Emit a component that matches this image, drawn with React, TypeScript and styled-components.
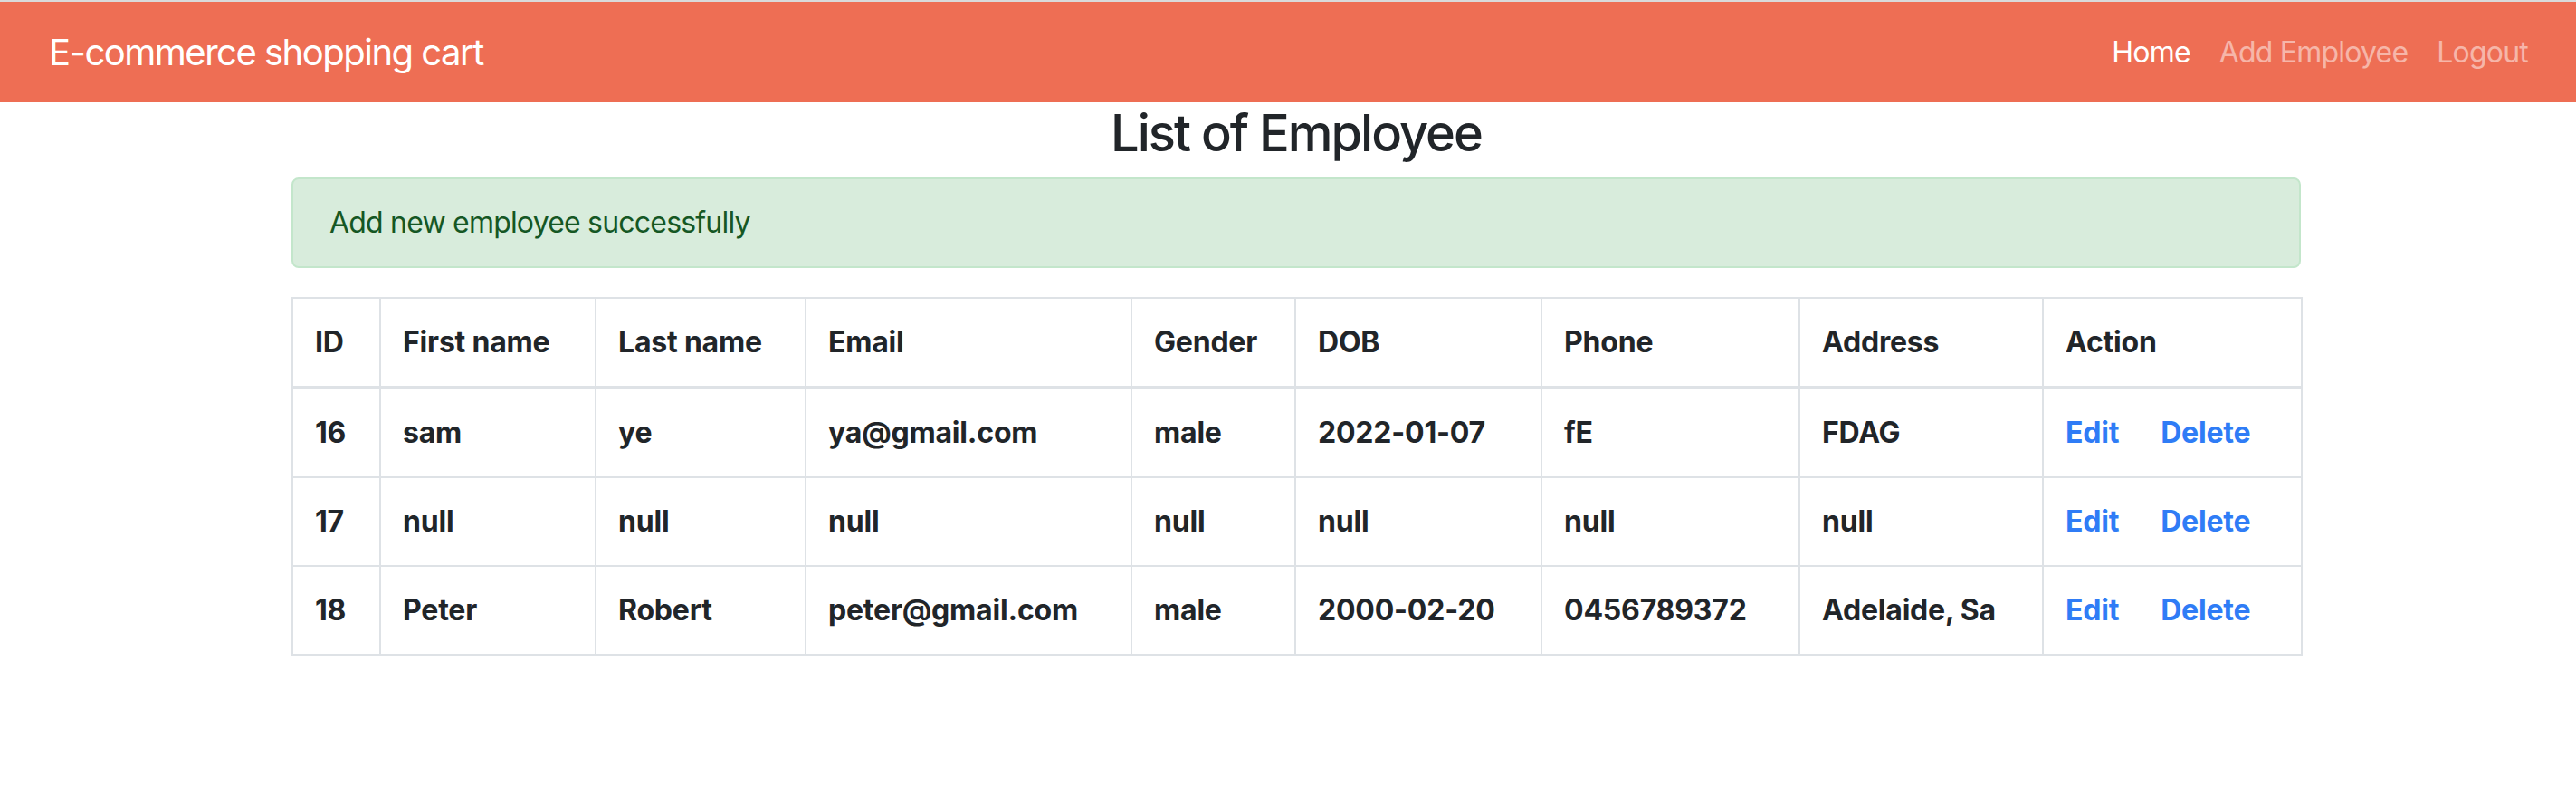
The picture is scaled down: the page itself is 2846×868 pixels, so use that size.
import React from 'react';
import styled, { createGlobalStyle } from 'styled-components';

const GlobalStyle = createGlobalStyle`
  html, body {
    margin: 0;
    padding: 0;
    background: #fff;
  }
  body {
    font-family: Inter, "Noto Sans", "Liberation Sans", sans-serif;
    color: #212529;
    font-size: 32px;
    line-height: 1.5;
  }
  * {
    box-sizing: border-box;
  }
`;

const Page = styled.div`
  min-height: 868px;
  border-top: 2px solid #dadada;
`;

const Navbar = styled.nav`
  height: 111px;
  background: #ee6e54;
  display: flex;
  align-items: center;
  justify-content: space-between;
  padding: 0 37px 0 54px;
`;

const Brand = styled.a`
  color: #fff;
  font-size: 40px;
  line-height: 60px;
  letter-spacing: -1.5px;
  text-decoration: none;
`;

const NavList = styled.ul`
  list-style: none;
  margin: 0;
  padding: 0;
  display: flex;
`;

const NavLink = styled.a<{ $active?: boolean }>`
  display: block;
  padding: 16px 16px;
  font-size: 32px;
  line-height: 48px;
  letter-spacing: -0.8px;
  text-decoration: none;
  color: ${p => (p.$active ? '#fff' : 'rgba(255, 255, 255, 0.5)')};
`;

const Container = styled.main`
  width: 2220px;
  margin-left: 322px;
`;

const Title = styled.h3`
  margin: 0 0 16px;
  padding-top: 2px;
  font-size: 56px;
  line-height: 65px;
  font-weight: 500;
  letter-spacing: -2px;
  text-align: center;
`;

const Alert = styled.div`
  padding: 24px 40px;
  margin-bottom: 32px;
  border: 2px solid #c3e6cb;
  border-radius: 8px;
  background: #d8ecdc;
  color: #155724;
  font-size: 32px;
  line-height: 48px;
  letter-spacing: -0.8px;
`;

const Table = styled.table`
  width: 100%;
  border-collapse: collapse;
  table-layout: fixed;
  font-size: 32px;
  line-height: 48px;
`;

const HeadCell = styled.th`
  text-align: left;
  font-weight: 700;
  padding: 24px;
  border: 2px solid #dee2e6;
  border-bottom-width: 4px;
  white-space: nowrap;
  letter-spacing: -0.2px;
`;

const Cell = styled.td`
  font-weight: 700;
  padding: 24px;
  border: 2px solid #dee2e6;
  white-space: nowrap;
  overflow: hidden;
  letter-spacing: -0.2px;
`;

const ActionLink = styled.a<{ $gap?: boolean }>`
  color: #2f7cf6;
  text-decoration: none;
  font-weight: 700;
  margin-right: ${p => (p.$gap ? '46px' : '0')};
`;

const columns = [
  { label: 'ID', width: 97 },
  { label: 'First name', width: 238 },
  { label: 'Last name', width: 232 },
  { label: 'Email', width: 360 },
  { label: 'Gender', width: 181 },
  { label: 'DOB', width: 272 },
  { label: 'Phone', width: 285 },
  { label: 'Address', width: 269 },
  { label: 'Action', width: 286 },
];

const employees = [
  { id: 16, first: 'sam', last: 'ye', email: 'ya@gmail.com', gender: 'male', dob: '2022-01-07', phone: 'fE', address: 'FDAG' },
  { id: 17, first: 'null', last: 'null', email: 'null', gender: 'null', dob: 'null', phone: 'null', address: 'null' },
  { id: 18, first: 'Peter', last: 'Robert', email: 'peter@gmail.com', gender: 'male', dob: '2000-02-20', phone: '0456789372', address: 'Adelaide, Sa' },
];

const App: React.FC = () => {
  return (
    <Page>
      <GlobalStyle />
      <Navbar>
        <Brand href="#">E-commerce shopping cart</Brand>
        <NavList>
          <li><NavLink href="#" $active>Home</NavLink></li>
          <li><NavLink href="#">Add Employee</NavLink></li>
          <li><NavLink href="#">Logout</NavLink></li>
        </NavList>
      </Navbar>

      <Container>
        <Title>List of Employee</Title>
        <Alert>Add new employee successfully</Alert>

        <Table>
          <colgroup>
            {columns.map(c => (
              <col key={c.label} style={{ width: c.width }} />
            ))}
          </colgroup>
          <thead>
            <tr>
              {columns.map(c => (
                <HeadCell key={c.label}>{c.label}</HeadCell>
              ))}
            </tr>
          </thead>
          <tbody>
            {employees.map(e => (
              <tr key={e.id}>
                <Cell>{e.id}</Cell>
                <Cell>{e.first}</Cell>
                <Cell>{e.last}</Cell>
                <Cell>{e.email}</Cell>
                <Cell>{e.gender}</Cell>
                <Cell>{e.dob}</Cell>
                <Cell>{e.phone}</Cell>
                <Cell>{e.address}</Cell>
                <Cell>
                  <ActionLink href="#" $gap>Edit</ActionLink>
                  <ActionLink href="#">Delete</ActionLink>
                </Cell>
              </tr>
            ))}
          </tbody>
        </Table>
      </Container>
    </Page>
  );
};

export default App;
